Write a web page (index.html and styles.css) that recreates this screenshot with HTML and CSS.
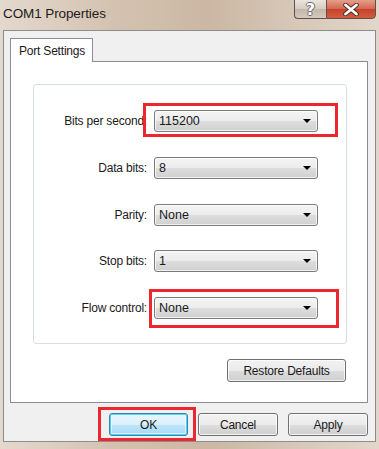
FILE: index.html
```html
<!DOCTYPE html>
<html lang="en">
  <head>
    <meta charset="UTF-8" />
    <meta name="viewport" content="width=device-width, initial-scale=1.0" />
    <title>COM1 Properties</title>
    <link rel="stylesheet" href="styles.css">
  </head>
  <body>
    <div class="window">
      <header class="titlebar">
        <h1>COM1 Properties</h1>
        <div class="caption-buttons">
          <button class="cap help">?</button>
          <button class="cap close">
            <svg width="18" height="13" viewBox="0 0 18 13">
              <path d="M3.5 2 L14.5 11 M14.5 2 L3.5 11" stroke="#4a2a22" stroke-width="4.6" stroke-linecap="round" />
              <path d="M3.5 2 L14.5 11 M14.5 2 L3.5 11" stroke="#ffffff" stroke-width="2.8" stroke-linecap="round" />
            </svg>
          </button>
        </div>
      </header>
      <div class="client">
        <div class="tabs">
          <div class="tab">Port Settings</div>
        </div>
        <div class="panel">
          <div class="group">
            <div class="row">
              <label>Bits per second:</label>
              <div class="combo">115200<span class="arrow"></span></div>
              <div class="mark mark-bits"></div>
            </div>
            <div class="row">
              <label>Data bits:</label>
              <div class="combo">8<span class="arrow"></span></div>
            </div>
            <div class="row">
              <label>Parity:</label>
              <div class="combo">None<span class="arrow"></span></div>
            </div>
            <div class="row">
              <label>Stop bits:</label>
              <div class="combo">1<span class="arrow"></span></div>
            </div>
            <div class="row">
              <label>Flow control:</label>
              <div class="combo">None<span class="arrow"></span></div>
              <div class="mark mark-flow"></div>
            </div>
          </div>
          <div class="panel-actions">
            <button class="btn restore">Restore Defaults</button>
          </div>
        </div>
        <div class="dialog-actions">
          <div class="ok-wrap">
            <button class="btn default">OK</button>
            <div class="mark mark-ok"></div>
          </div>
          <button class="btn">Cancel</button>
          <button class="btn">Apply</button>
        </div>
      </div>
    </div>
  </body>
</html>
```

FILE: styles.css
```css
body {
  margin: 0;
  padding: 0;
  font-family: "Liberation Sans", Arial, sans-serif;
  font-size: 12px;
  color: #1a1a1a;
}
.window {
  width: 379px;
  height: 449px;
  background: linear-gradient(90deg, #e4d9ce 0%, #d4c2b0 30%, #cbb7a3 55%, #d8c9ba 80%, #e2d6ca 100%);
  display: flex;
  flex-direction: column;
  overflow: hidden;
}
.titlebar {
  height: 30px;
  display: flex;
  align-items: flex-start;
  flex-shrink: 0;
}
.titlebar h1 {
  margin: 0;
  padding: 6px 0 0 3px;
  font-size: 13.5px;
  font-weight: normal;
  color: #1c1c1c;
  letter-spacing: -0.1px;
}
.caption-buttons {
  margin-left: auto;
  margin-right: 3px;
  margin-top: -2px;
  display: flex;
}
.cap {
  height: 21px;
  border: 1px solid #5e5248;
  padding: 0;
  margin: 0;
  display: flex;
  align-items: center;
  justify-content: center;
}
.help {
  width: 32px;
  border-radius: 0 0 0 4px;
  border-right: none;
  background: linear-gradient(#eee8e1, #d6ccc1 50%, #c2b5a8 51%, #d5cabf);
  font-family: "DejaVu Sans", sans-serif;
  font-size: 16px;
  font-weight: bold;
  color: #ffffff;
  text-shadow: 1px 0 0 #6a6a6a, -1px 0 0 #6a6a6a, 0 1px 0 #6a6a6a, 0 -1px 0 #6a6a6a;
  padding-top: 2px;
}
.close {
  width: 50px;
  border-radius: 0 0 4px 0;
  background: linear-gradient(#e7a591, #d46a53 50%, #c3402a 51%, #d45b3f);
  padding-top: 2px;
}
.client {
  flex: 1;
  margin: 0 3px 7px 3px;
  background: #f0f0f0;
  border: 1px solid #8b8c8c;
  padding: 7px 7px 0 6px;
  display: flex;
  flex-direction: column;
}
.tabs {
  display: flex;
  height: 24px;
  margin-bottom: -1px;
  position: relative;
  z-index: 1;
}
.tab {
  width: 83px;
  background: #fff;
  border: 1px solid #898c95;
  border-bottom: none;
  box-sizing: border-box;
  height: 24px;
  padding: 5px 0 0 8px;
  font-size: 12px;
  letter-spacing: -0.2px;
}
.panel {
  height: 342px;
  box-sizing: border-box;
  background: #fff;
  border: 1px solid #898c95;
  padding: 22px 20px 0 22px;
  display: flex;
  flex-direction: column;
}
.group {
  height: 260px;
  box-sizing: border-box;
  border: 1px solid #d5dfe5;
  border-radius: 3px;
  padding: 25px 0 0 0;
  display: flex;
  flex-direction: column;
  gap: 25px;
}
.row {
  display: flex;
  align-items: center;
  position: relative;
  height: 22px;
}
.row:nth-child(4) {
  margin-top: -1px;
}
.row label {
  width: 113px;
  text-align: right;
  margin-right: 7px;
  letter-spacing: -0.2px;
}
.combo {
  width: 164px;
  height: 22px;
  box-sizing: border-box;
  border: 1px solid #7b7b7b;
  border-radius: 3px;
  background: linear-gradient(#f4f4f4, #ececec 50%, #dddddd 51%, #d0d0d0);
  box-shadow: inset 0 0 0 1px rgba(255, 255, 255, 0.7);
  padding: 0 0 0 4px;
  display: flex;
  align-items: center;
  font-size: 12.5px;
}
.arrow {
  margin-left: auto;
  margin-right: 6px;
  width: 0;
  height: 0;
  border-left: 4px solid transparent;
  border-right: 4px solid transparent;
  border-top: 4px solid #000;
}
.mark {
  position: absolute;
  border: 3px solid #ee2630;
  box-sizing: border-box;
  pointer-events: none;
}
.mark-bits {
  left: 109px;
  top: -7px;
  width: 195px;
  height: 34px;
}
.mark-flow {
  left: 115px;
  top: -8px;
  width: 190px;
  height: 39px;
}
.panel-actions {
  display: flex;
  justify-content: flex-end;
  margin-top: 15px;
  padding-right: 1px;
}
.btn {
  font-family: "Liberation Sans", Arial, sans-serif;
  font-size: 12px;
  color: #1a1a1a;
  width: 80px;
  height: 23px;
  border: 1px solid #707070;
  border-radius: 3px;
  background: linear-gradient(#f2f2f2, #ebebeb 50%, #dddddd 51%, #cfcfcf);
  box-shadow: inset 0 0 0 1px rgba(255, 255, 255, 0.75);
  padding: 0;
  letter-spacing: -0.2px;
}
.restore {
  width: 119px;
}
.dialog-actions {
  display: flex;
  justify-content: flex-end;
  gap: 10px;
  margin-top: 10px;
}
.ok-wrap {
  position: relative;
  display: flex;
}
.btn.default {
  width: 79px;
  border-color: #3c7fb1;
  box-shadow: inset 0 0 0 1px #48d8fb, inset 0 0 0 2px rgba(255, 255, 255, 0.5);
  background: linear-gradient(#eaf6fd, #d9f0fc 50%, #bee6fd 51%, #a7d9f5);
}
.mark-ok {
  left: -11px;
  top: -6px;
  width: 98px;
  height: 34px;
}
```
